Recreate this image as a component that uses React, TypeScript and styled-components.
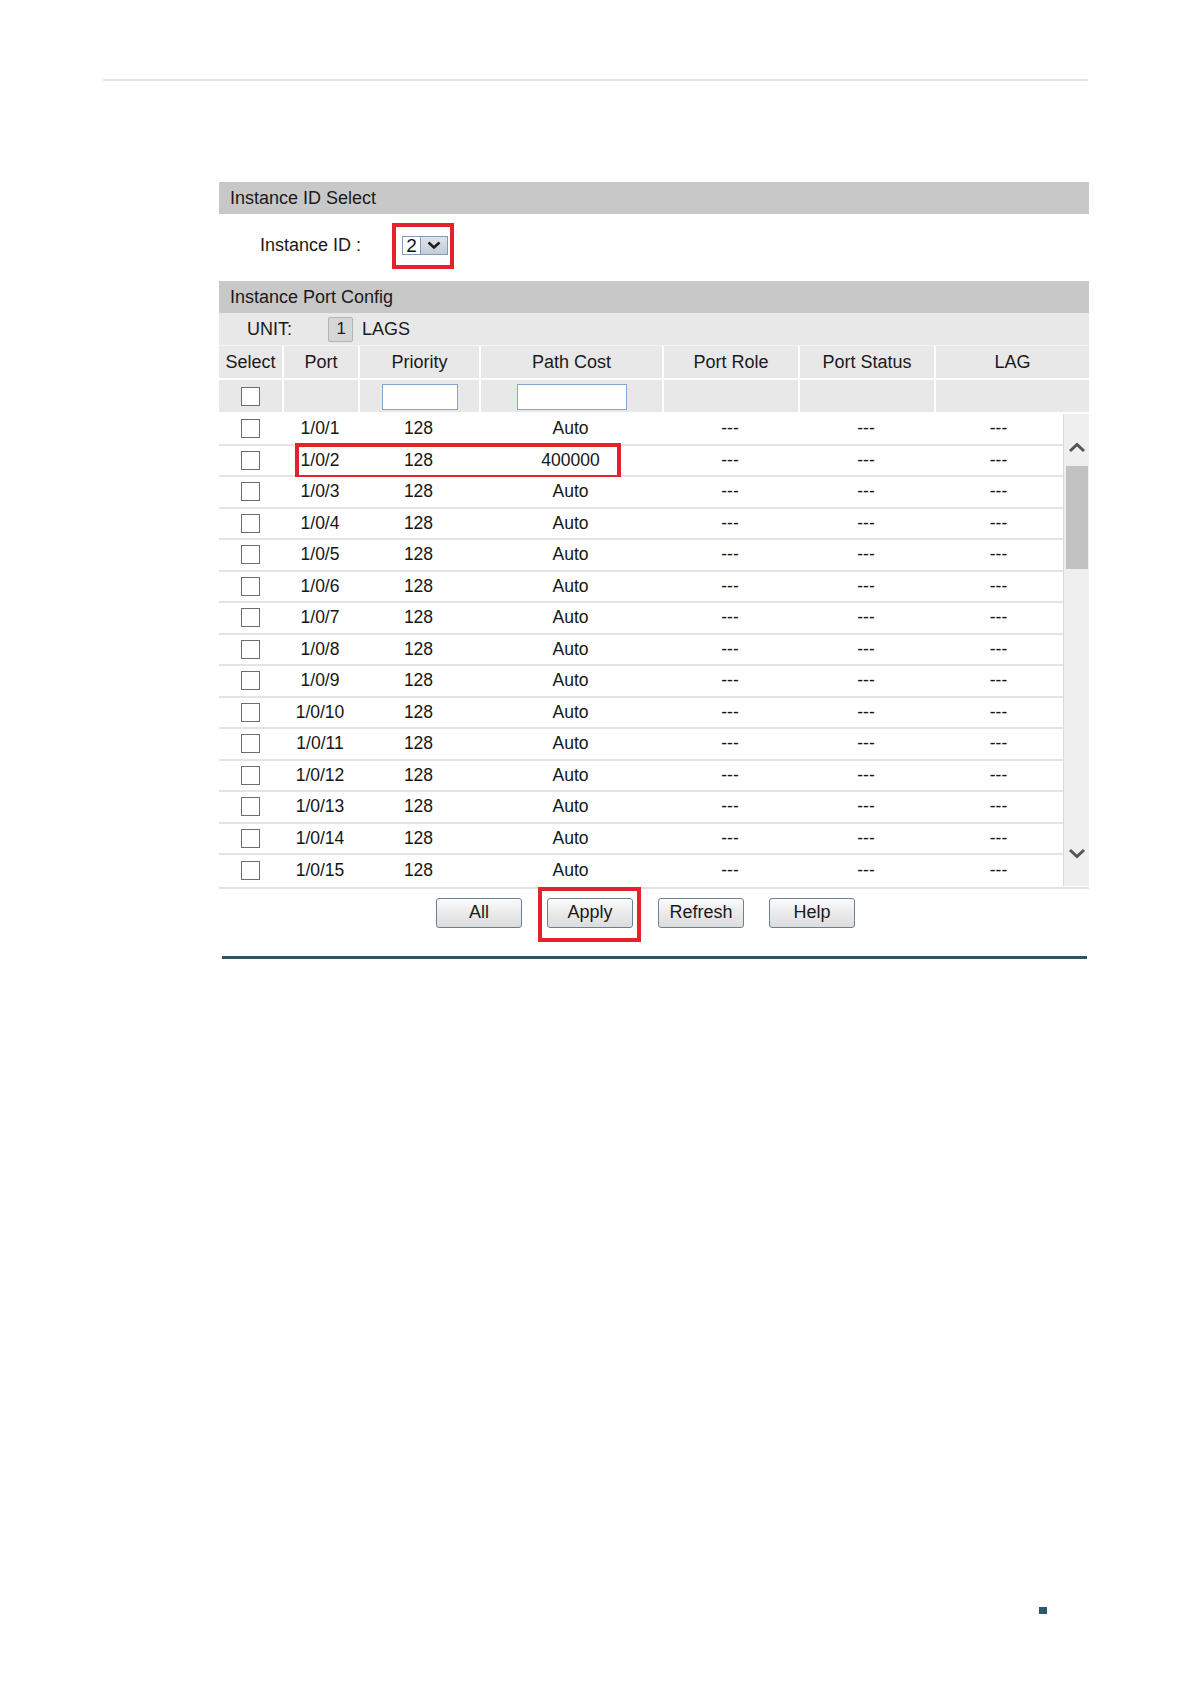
import React from "react";
import styled, { createGlobalStyle, css } from "styled-components";

const GlobalStyle = createGlobalStyle`
  body {
    margin: 0;
    background: #ffffff;
    font-family: "Liberation Sans", Arial, sans-serif;
    color: #1a1a1a;
  }
`;

const HEAD_COLS = "63px 76px 121px 183px 136px 136px 155px";
const BODY_COLS = "63px 76px 121px 183px 136px 136px 129px";
const RED = "#e3222b";

const ports = Array.from({ length: 15 }, (_, i) => ({
  port: `1/0/${i + 1}`,
  priority: "128",
  cost: i === 1 ? "400000" : "Auto",
}));

export default function App() {
  return (
    <>
      <GlobalStyle />
      <Page>
        <TopRule />
        <Panel>
          <SectionTitle>Instance ID Select</SectionTitle>
          <InstanceRow>
            <FieldLabel>Instance ID :</FieldLabel>
            <SelectMark>
              <SelectBox>
                <SelectValue>2</SelectValue>
                <SelectButton>
                  <svg width="16" height="10" viewBox="0 0 16 10">
                    <path d="M2.5 2.5 L8 7.5 L13.5 2.5" fill="none" stroke="#1e1e1e" strokeWidth="2.6" />
                  </svg>
                </SelectButton>
              </SelectBox>
            </SelectMark>
          </InstanceRow>

          <SectionTitle>Instance Port Config</SectionTitle>
          <UnitBar>
            <span>UNIT:</span>
            <UnitChip>1</UnitChip>
            <span>LAGS</span>
          </UnitBar>
          <HeadRow>
            <HeadCell>Select</HeadCell>
            <HeadCell>Port</HeadCell>
            <HeadCell>Priority</HeadCell>
            <HeadCell>Path Cost</HeadCell>
            <HeadCell>Port Role</HeadCell>
            <HeadCell>Port Status</HeadCell>
            <HeadCell>LAG</HeadCell>
          </HeadRow>
          <HeadRow>
            <HeadCell><Check /></HeadCell>
            <HeadCell />
            <HeadCell><TextInput w={76} /></HeadCell>
            <HeadCell><TextInput w={110} /></HeadCell>
            <HeadCell />
            <HeadCell />
            <HeadCell />
          </HeadRow>

          <BodyWrap>
            <Rows>
              {ports.map((p, i) => (
                <Row key={p.port} marked={i === 1}>
                  <Cell><Check /></Cell>
                  <Cell>{p.port}</Cell>
                  <Cell>{p.priority}</Cell>
                  <Cell>{p.cost}</Cell>
                  <Cell>---</Cell>
                  <Cell>---</Cell>
                  <Cell>---</Cell>
                </Row>
              ))}
            </Rows>
            <Scrollbar>
              <ScrollArrow place="top">
                <svg width="18" height="11" viewBox="0 0 18 11">
                  <path d="M2 9 L9 2.5 L16 9" fill="none" stroke="#555" strokeWidth="3" />
                </svg>
              </ScrollArrow>
              <Thumb />
              <Track />
              <ScrollArrow place="bottom">
                <svg width="18" height="11" viewBox="0 0 18 11">
                  <path d="M2 2 L9 8.5 L16 2" fill="none" stroke="#555" strokeWidth="3" />
                </svg>
              </ScrollArrow>
            </Scrollbar>
          </BodyWrap>

          <ButtonBar>
            <Button>All</Button>
            <Button marked>Apply</Button>
            <Button>Refresh</Button>
            <Button>Help</Button>
          </ButtonBar>
        </Panel>
        <BottomRule />
        <PageMark />
      </Page>
    </>
  );
}

const Page = styled.div`
  width: 1191px;
  height: 1684px;
  display: flex;
  flex-direction: column;
  align-items: flex-start;
`;

const TopRule = styled.div`
  margin: 79px 0 0 103px;
  width: 985px;
  height: 2px;
  background: #e4e4e4;
`;

const Panel = styled.div`
  margin: 101px 0 0 219px;
  width: 870px;
  display: flex;
  flex-direction: column;
`;

const SectionTitle = styled.div`
  height: 32px;
  background: #c8c8c8;
  padding-left: 11px;
  display: flex;
  align-items: center;
  font-size: 18px;
  color: #1a1a1a;
`;

const InstanceRow = styled.div`
  height: 67px;
  box-sizing: border-box;
  display: flex;
  align-items: center;
  padding: 0 0 4px 41px;
`;

const FieldLabel = styled.span`
  width: 132px;
  font-size: 18px;
  color: #1a1a1a;
`;

const SelectMark = styled.div`
  border: 4px solid ${RED};
  padding: 9px 2px 10px 6px;
`;

const SelectBox = styled.div`
  display: flex;
  width: 46px;
  height: 19px;
  border: 1px solid #7f9db9;
  box-sizing: border-box;
`;

const SelectValue = styled.div`
  width: 17px;
  background: #fff;
  font-size: 19px;
  line-height: 17px;
  text-align: center;
  color: #111;
`;

const SelectButton = styled.div`
  flex: 1;
  background: linear-gradient(#dfe4ea, #c3cbd5);
  border-left: 1px solid #8a9bb0;
  display: flex;
  align-items: center;
  justify-content: center;
`;

const UnitBar = styled.div`
  height: 33px;
  background: #e8e8e8;
  display: flex;
  align-items: center;
  padding-left: 28px;
  font-size: 18px;
  color: #1a1a1a;
  border-bottom: 1px solid #f4f4f4;
  box-sizing: border-box;
`;

const UnitChip = styled.span`
  margin: 0 9px 0 36px;
  width: 25px;
  height: 25px;
  box-sizing: border-box;
  border: 1px solid #b4b4b4;
  border-radius: 2px;
  background: #d6d6d6;
  display: flex;
  align-items: center;
  justify-content: flex-end;
  padding-right: 6px;
  font-size: 17px;
`;

const HeadRow = styled.div`
  display: grid;
  grid-template-columns: ${HEAD_COLS};
  height: 34px;
  background: #e8e8e8;
  border-bottom: 2px solid #ffffff;
  box-sizing: border-box;
`;

const HeadCell = styled.div`
  display: flex;
  align-items: center;
  justify-content: center;
  font-size: 18px;
  color: #1a1a1a;
  border-left: 2px solid #ffffff;
  &:first-child {
    border-left: none;
  }
`;

const Check = styled.span`
  width: 19px;
  height: 19px;
  box-sizing: border-box;
  border: 1.5px solid #6e6e6e;
  background: #fff;
  display: inline-block;
`;

const TextInput = styled.span<{ w: number }>`
  width: ${(p) => p.w}px;
  height: 26px;
  box-sizing: border-box;
  border: 1.5px solid #86a8d0;
  background: #fff;
  margin-top: 1px;
`;

const BodyWrap = styled.div`
  display: flex;
  border-left: 1px solid #d6d6d6;
  border-bottom: 2px solid #e2e2e2;
`;

const Rows = styled.div`
  width: 843px;
  display: flex;
  flex-direction: column;
`;

const Row = styled.div<{ marked?: boolean }>`
  position: relative;
  display: grid;
  grid-template-columns: ${BODY_COLS};
  margin-left: -1px;
  height: 31.5px;
  box-sizing: border-box;
  border-bottom: 2px solid #e4e4e4;
  background: #fff;
  &:last-child {
    border-bottom: none;
  }
  ${(p) =>
    p.marked &&
    css`
      &::after {
        content: "";
        position: absolute;
        left: 76px;
        top: -3px;
        width: 326px;
        height: 36px;
        box-sizing: border-box;
        border: 4px solid ${RED};
      }
    `}
`;

const Cell = styled.div`
  display: flex;
  align-items: center;
  justify-content: center;
  font-size: 17.5px;
  color: #161616;
`;

const Scrollbar = styled.div`
  width: 26px;
  height: 472px;
  box-sizing: border-box;
  border-left: 1px solid #dadada;
  background: #efefef;
  display: flex;
  flex-direction: column;
  align-items: center;
`;

const ScrollArrow = styled.div<{ place: "top" | "bottom" }>`
  height: ${(p) => (p.place === "top" ? 52 : 50)}px;
  box-sizing: border-box;
  padding-top: ${(p) => (p.place === "top" ? 28 : 12)}px;
  display: flex;
  justify-content: center;
  align-items: flex-start;
`;

const Thumb = styled.div`
  width: 22px;
  height: 103px;
  background: #c2c2c2;
`;

const Track = styled.div`
  flex: 1;
`;

const ButtonBar = styled.div`
  display: flex;
  gap: 25px;
  padding: 9px 0 0 217px;
`;

const Button = styled.button<{ marked?: boolean }>`
  position: relative;
  width: 86px;
  height: 30px;
  padding: 0;
  border: 1px solid #6b7f98;
  border-radius: 3px;
  background: linear-gradient(#fbfbfb, #e9e9e9 55%, #dcdcdc);
  font-family: "Liberation Sans", Arial, sans-serif;
  font-size: 18px;
  color: #1a1a1a;
  ${(p) =>
    p.marked &&
    css`
      &::after {
        content: "";
        position: absolute;
        left: -10px;
        right: -9px;
        top: -12px;
        bottom: -15px;
        border: 4px solid ${RED};
      }
    `}
`;

const BottomRule = styled.div`
  margin: 28px 0 0 222px;
  width: 865px;
  height: 3px;
  background: #2d5566;
`;

const PageMark = styled.div`
  margin: 648px 0 0 1039px;
  width: 8px;
  height: 7px;
  background: #2f5868;
`;
